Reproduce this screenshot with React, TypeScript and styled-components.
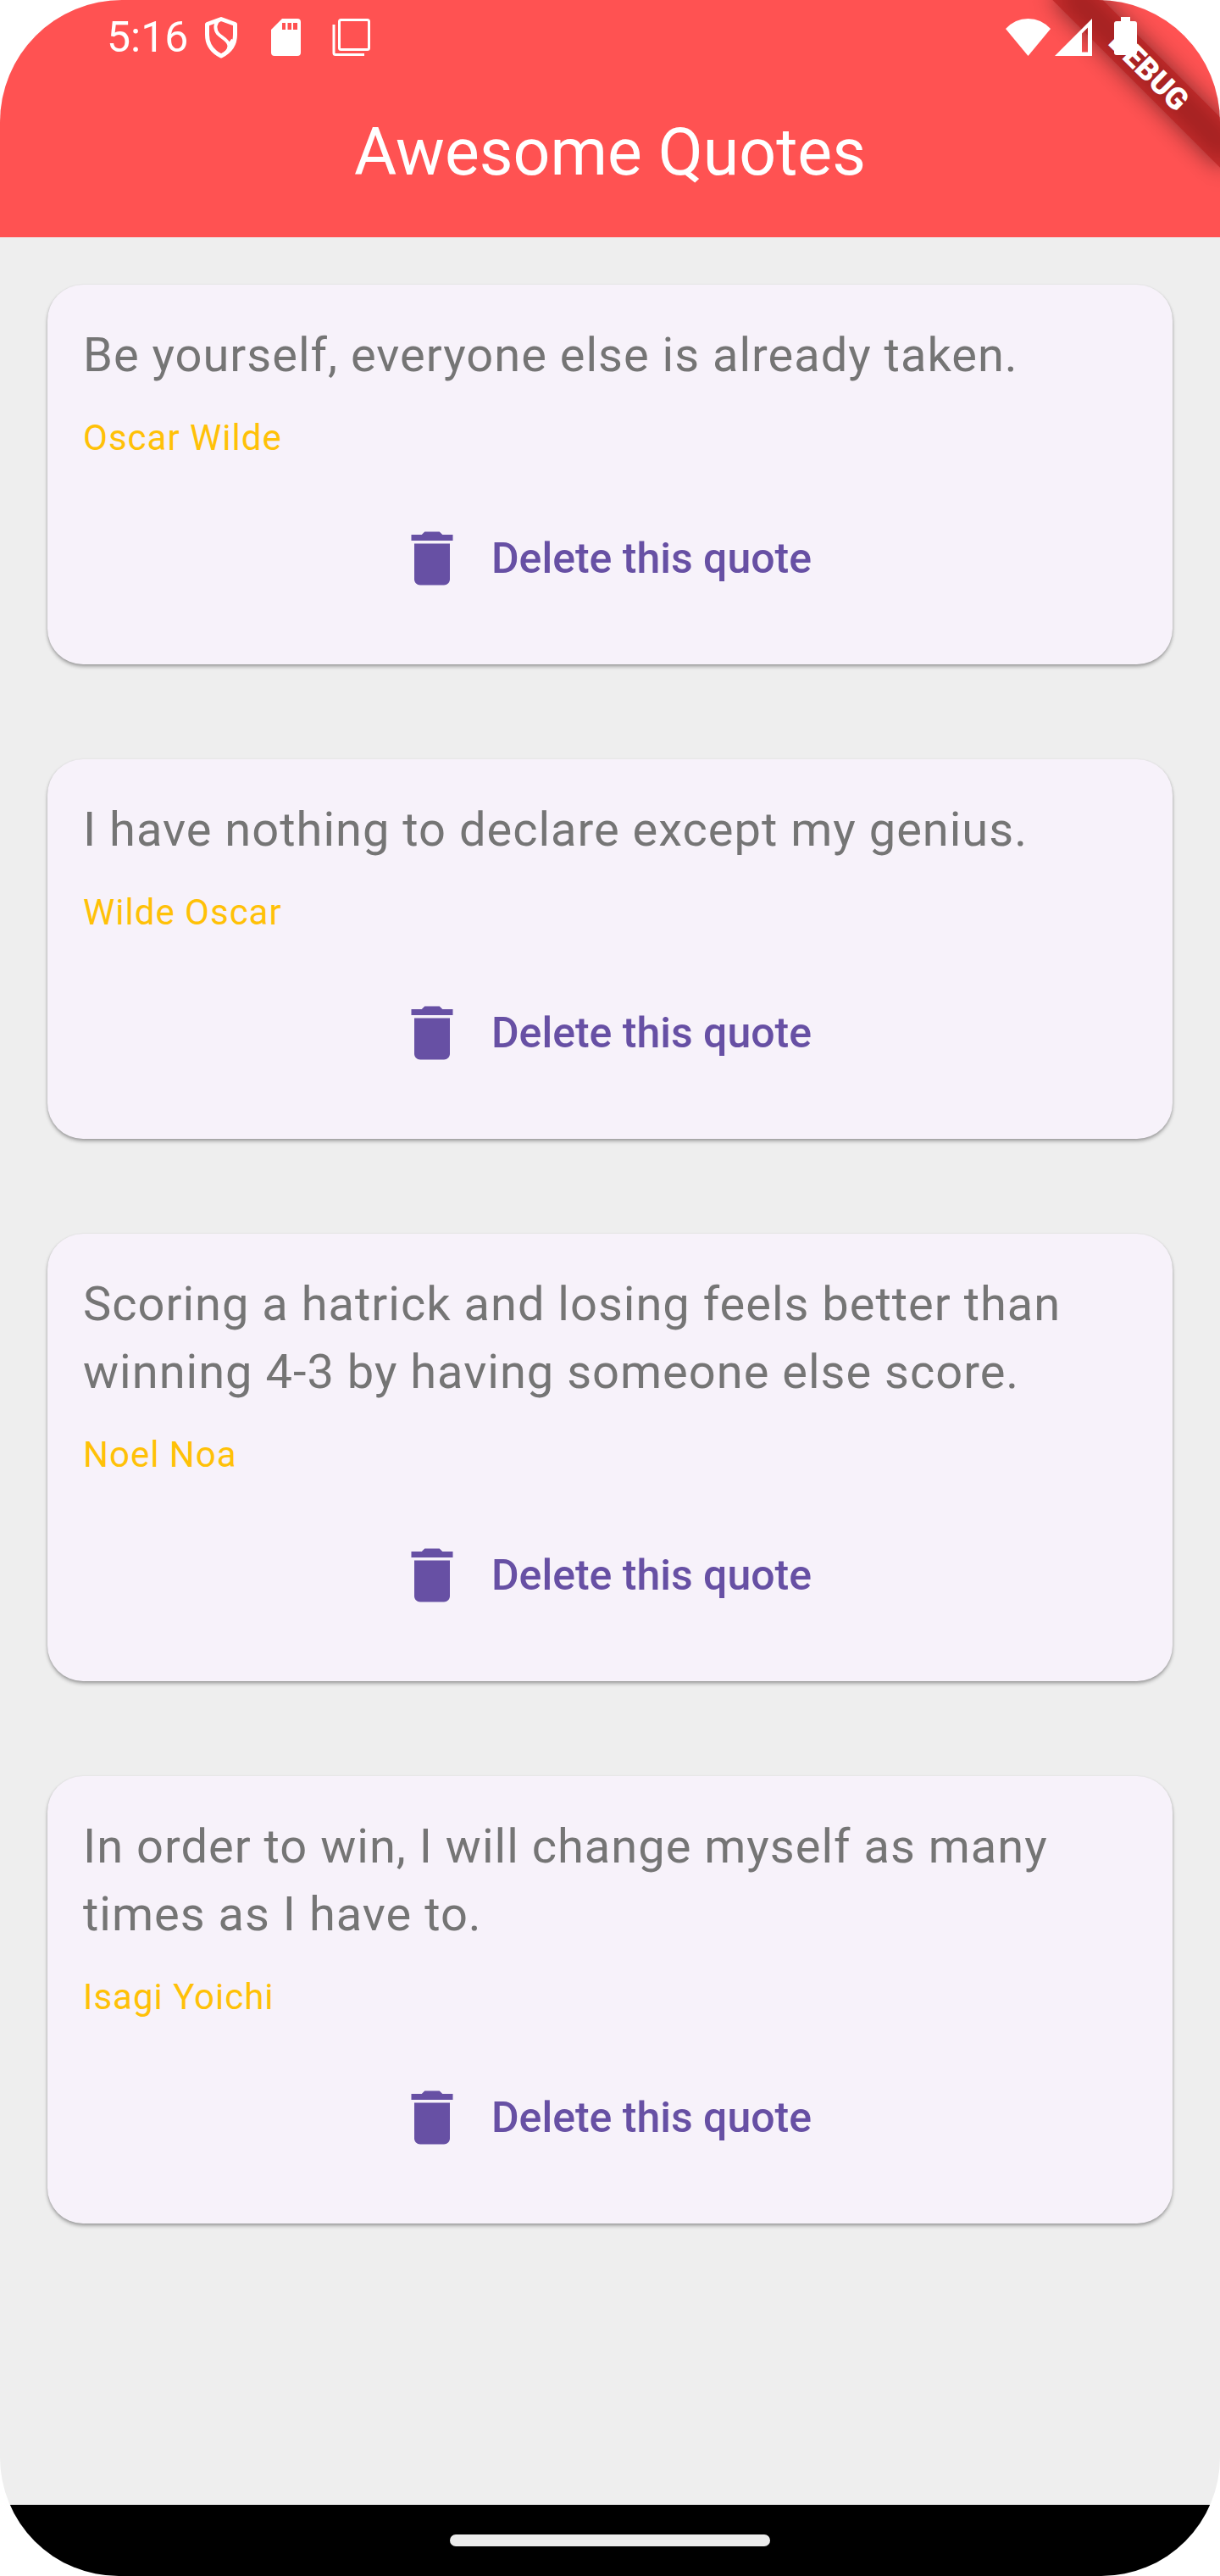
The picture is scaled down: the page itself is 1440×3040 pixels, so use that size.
import React, { useState } from "react";
import styled, { createGlobalStyle } from "styled-components";
import { MdDelete } from "react-icons/md";

const GlobalStyle = createGlobalStyle`
  *, *::before, *::after { box-sizing: border-box; }
  body {
    margin: 0;
    background: #ffffff;
    font-family: Roboto, "Liberation Sans", sans-serif;
  }
`;

const Screen = styled.div`
  position: relative;
  display: flex;
  flex-direction: column;
  min-height: 100vh;
  overflow: hidden;
  border-radius: 144px 144px 140px 140px;
  background: #eeeeee;
`;

const Header = styled.header`
  background: #ff5252;
  color: #ffffff;
`;

const StatusBar = styled.div`
  position: relative;
  z-index: 2;
  display: flex;
  align-items: center;
  justify-content: space-between;
  height: 88px;
  padding: 0 98px 0 126px;
`;

const StatusGroup = styled.div<{ $gap: number }>`
  display: flex;
  align-items: center;
  gap: ${({ $gap }) => $gap}px;
`;

const Clock = styled.time`
  font-size: 50px;
  line-height: 56px;
`;

const NoticeIcons = styled.div`
  display: flex;
  gap: 21px;
`;

const Title = styled.h1`
  margin: 0;
  padding: 47px 56px 55px;
  font-size: 77px;
  font-weight: 400;
  line-height: 90px;
  text-align: center;
`;

const DebugBanner = styled.div`
  position: absolute;
  z-index: 1;
  top: 63px;
  right: -56px;
  width: 280px;
  height: 42px;
  transform: rotate(45deg);

  &::before {
    content: "";
    position: absolute;
    inset: 0;
    background: rgba(0, 0, 0, 0.5);
    filter: blur(14px);
  }
`;

const DebugLabel = styled.span`
  position: relative;
  display: block;
  background: rgba(183, 28, 28, 0.63);
  color: #ffffff;
  font-size: 36px;
  font-weight: 900;
  line-height: 42px;
  text-align: center;
`;

const QuoteList = styled.main`
  display: flex;
  flex: 1;
  flex-direction: column;
  gap: 112px;
  padding: 56px;
`;

const Card = styled.article`
  display: flex;
  flex-direction: column;
  gap: 28px;
  padding: 43px 42px 41px;
  border-radius: 42px;
  background: #f7f2fa;
  box-shadow: 0 3px 4px rgba(0, 0, 0, 0.28), 0 1px 3px rgba(0, 0, 0, 0.12);
`;

const QuoteText = styled.p`
  margin: 0;
  color: #757575;
  font-size: 56px;
  letter-spacing: 1px;
  line-height: 80px;
`;

const Author = styled.p`
  margin: 0;
  color: #ffc107;
  font-size: 42px;
  letter-spacing: 1px;
  line-height: 60px;
`;

const DeleteButton = styled.button`
  display: flex;
  align-items: center;
  align-self: center;
  gap: 28px;
  height: 168px;
  padding: 0 56px 0 42px;
  border: 0;
  border-radius: 84px;
  background: transparent;
  color: #6750a4;
  font-family: inherit;
  font-size: 50px;
  font-weight: 500;
  line-height: 70px;
  cursor: pointer;
`;

const NavigationBar = styled.footer`
  display: flex;
  align-items: center;
  justify-content: center;
  height: 84px;
  background: #000000;
`;

const HomeHandle = styled.div`
  width: 378px;
  height: 14px;
  border-radius: 7px;
  background: #ececec;
`;

const ShieldIcon = () => (
  <svg width="56" height="56" viewBox="0 0 56 56" fill="none" stroke="#fff" strokeWidth="5" strokeLinejoin="round" aria-hidden="true">
    <path d="M28 6.500 L44.500 12.500 V25 C44.500 37 38 45 28 50 C18 45 11.500 37 11.500 25 V12.500 Z" />
    <path d="M26 7.500 C21 10 19.500 18 24.500 24 C28 28 37 31 37.500 38 C37.500 44 33 47 28 50 M37.500 37 L42 31" strokeWidth="4" />
  </svg>
);

const SdCardIcon = () => (
  <svg width="56" height="56" viewBox="0 0 56 56" fill="#fff" fillRule="evenodd" aria-hidden="true">
    <path d="M23 6 H41 Q45 6 45 10 V46 Q45 50 41 50 H14 Q10 50 10 46 V19 Z M23 11 V19 H27 V11 Z M29.500 11 V19 H34 V11 Z M36 11 V19 H41 V11 Z" />
  </svg>
);

const StackIcon = () => (
  <svg width="56" height="56" viewBox="0 0 56 56" fill="none" stroke="#fff" strokeWidth="3" aria-hidden="true">
    <rect x="13.500" y="7.500" width="35" height="35" rx="2" />
    <path d="M7 13 V46.500 Q7 48.500 9 48.500 H43" />
  </svg>
);

const WifiIcon = () => (
  <svg width="53" height="44" viewBox="0 0 53 44" fill="#fff" aria-hidden="true">
    <path d="M0 12 Q11 0 26.500 0 Q42 0 53 12 L26.500 44 Z" />
  </svg>
);

const SignalIcon = () => (
  <svg width="44" height="44" viewBox="0 0 44 44" fill="#fff" fillRule="evenodd" aria-hidden="true">
    <path d="M0 44 L44 0 V44 Z M32 17.500 L39 10.500 V39.500 H32 Z" />
  </svg>
);

const BatteryIcon = () => (
  <svg width="48" height="48" viewBox="0 0 48 48" fill="#fff" aria-hidden="true">
    <path d="M29 0 H40 V5 H45 Q48 5 48 8 V42 Q48 45 45 45 H24 Q21 45 21 42 V8 Q21 5 24 5 H29 Z" />
  </svg>
);

interface Quote {
  text: string;
  author: string;
}

const initialQuotes: Quote[] = [
  { text: "Be yourself, everyone else is already taken.", author: "Oscar Wilde" },
  { text: "I have nothing to declare except my genius.", author: "Wilde Oscar" },
  { text: "Scoring a hatrick and losing feels better than winning 4-3 by having someone else score.", author: "Noel Noa" },
  { text: "In order to win, I will change myself as many times as I have to.", author: "Isagi Yoichi" },
];

export default function App() {
  const [quotes, setQuotes] = useState(initialQuotes);
  const remove = (quote: Quote) => setQuotes((list) => list.filter((item) => item !== quote));

  return (
    <>
      <GlobalStyle />
      <Screen>
        <Header>
          <StatusBar>
            <StatusGroup $gap={11}>
              <Clock>5:16</Clock>
              <NoticeIcons>
                <ShieldIcon />
                <SdCardIcon />
                <StackIcon />
              </NoticeIcons>
            </StatusGroup>
            <StatusGroup $gap={5}>
              <WifiIcon />
              <SignalIcon />
              <BatteryIcon />
            </StatusGroup>
          </StatusBar>
          <Title>Awesome Quotes</Title>
        </Header>
        <DebugBanner>
          <DebugLabel>DEBUG</DebugLabel>
        </DebugBanner>
        <QuoteList>
          {quotes.map((quote) => (
            <Card key={quote.author}>
              <QuoteText>{quote.text}</QuoteText>
              <Author>{quote.author}</Author>
              <DeleteButton type="button" onClick={() => remove(quote)}>
                <MdDelete size={84} aria-hidden="true" />
                Delete this quote
              </DeleteButton>
            </Card>
          ))}
        </QuoteList>
        <NavigationBar>
          <HomeHandle />
        </NavigationBar>
      </Screen>
    </>
  );
}
